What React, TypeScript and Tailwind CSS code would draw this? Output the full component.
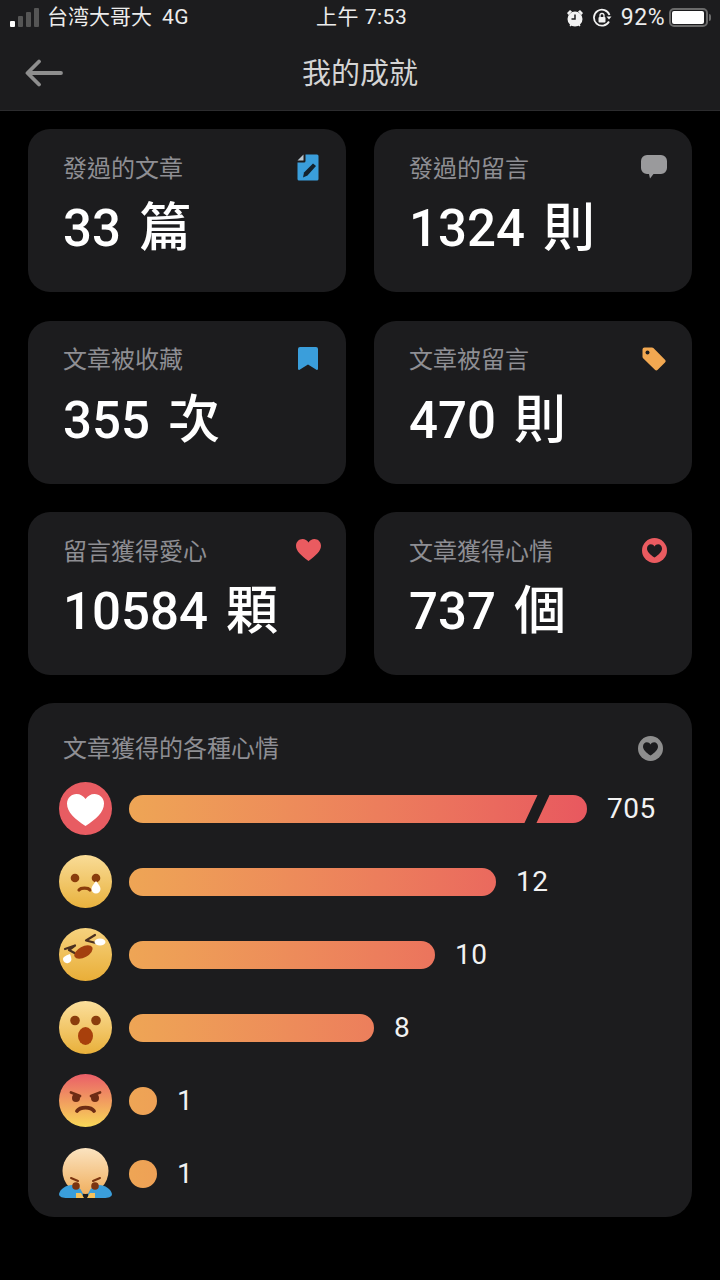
import type { ReactNode } from 'react';

function DocIcon() {
  return (
    <svg width="22" height="27" viewBox="0 0 22 27">
      <path d="M8.500 0.500H20a1.500 1.500 0 0 1 1.500 1.500v23a1.500 1.500 0 0 1-1.500 1.500H2A1.500 1.500 0 0 1 .5 25V8.500H7a1.500 1.500 0 0 0 1.500-1.500z" fill="#3a9edb" />
      <path d="M6.500 0.500v6H.5z" fill="#b9c6ce" />
      <path d="M16 9.500l3 2.500-8.500 9.500-4.500 2 1-5z" fill="#14222c" />
    </svg>
  );
}

function ChatIcon() {
  return (
    <svg width="26" height="24" viewBox="0 0 26 24">
      <path d="M6 0h14a6 6 0 0 1 6 6v7a6 6 0 0 1-6 6h-7.500L9 23.500 8 19H6a6 6 0 0 1-6-6V6a6 6 0 0 1 6-6z" fill="#9a9a9c" />
    </svg>
  );
}

function BookmarkIcon() {
  return (
    <svg width="20" height="23" viewBox="0 0 20 23">
      <path d="M2 0h16a2 2 0 0 1 2 2v20a1 1 0 0 1-1.600.7L10 17.500l-8.400 5.200A1 1 0 0 1 0 22V2a2 2 0 0 1 2-2z" fill="#3a9edb" />
    </svg>
  );
}

function TagIcon() {
  return (
    <svg width="24" height="24" viewBox="0 0 24 24">
      <path d="M2.500 0.500h7.500a2 2 0 0 1 1.400.6l11.600 11.600a2 2 0 0 1 0 2.800l-7.300 7.300a2 2 0 0 1-2.800 0L1.100 11.200a2 2 0 0 1-.6-1.400V2.500a2 2 0 0 1 2-2z" fill="#f2a851" />
      <circle cx="5.500" cy="5.500" r="2" fill="#1c1c1e" />
    </svg>
  );
}

function HeartIcon() {
  return (
    <svg width="25" height="22" viewBox="0 0 25 22">
      <path d="M12.500 22C5 16.500 0 12 0 6.800 0 2.900 3 0 6.600 0c2.400 0 4.600 1.300 5.900 3.400C13.800 1.300 16 0 18.400 0 22 0 25 2.900 25 6.800 25 12 20 16.500 12.500 22z" fill="#ea5b60" />
    </svg>
  );
}

function RingHeart({ color }: { color: string }) {
  return (
    <svg width="25" height="25" viewBox="0 0 25 25">
      <circle cx="12.500" cy="12.500" r="12.500" fill={color} />
      <path d="M12.500 19.500C8 16.300 5 13.700 5 10.400 5 8 6.800 6.300 8.900 6.300c1.500 0 2.800.8 3.600 2.100.8-1.300 2.100-2.100 3.600-2.100C18.200 6.300 20 8 20 10.400c0 3.300-3 5.900-7.500 9.100z" fill="#1c1c1e" />
    </svg>
  );
}

function Face({ id, top, bottom, children }: { id: string; top: string; bottom: string; children: ReactNode }) {
  return (
    <svg width="53" height="53" viewBox="0 0 53 53" className="shrink-0">
      <defs>
        <linearGradient id={id} x1="0" y1="0" x2="0" y2="1">
          <stop offset="0" stopColor={top} />
          <stop offset="1" stopColor={bottom} />
        </linearGradient>
      </defs>
      <circle cx="26.500" cy="26.500" r="26.500" fill={`url(#${id})`} />
      {children}
    </svg>
  );
}

function LoveFace() {
  return (
    <svg width="53" height="53" viewBox="0 0 53 53" className="shrink-0">
      <circle cx="26.500" cy="26.500" r="26.500" fill="#e85c62" />
      <path d="M26.500 44C16 37 8 30.500 8 21.500 8 16 12.500 12 17.500 12c3.800 0 7 2 9 5 2-3 5.200-5 9-5 5 0 9.500 4 9.500 9.500 0 9-8 15.500-18.500 22.500z" fill="#fff" />
    </svg>
  );
}

function CryFace() {
  return (
    <Face id="cry" top="#f9dc97" bottom="#e9b23e">
      <circle cx="16" cy="23" r="4.300" fill="#8a3d0c" />
      <circle cx="37" cy="23" r="4.300" fill="#8a3d0c" />
      <path d="M20 35c2-2.500 9-2.500 11 0" fill="none" stroke="#8a3d0c" strokeWidth="3.200" strokeLinecap="round" />
      <path d="M37 26c2.800 3.500 4.500 5.500 4.500 8a4.500 4.500 0 0 1-9 0c0-2.500 1.700-4.500 4.500-8z" fill="#fff" />
    </Face>
  );
}

function LaughFace() {
  return (
    <Face id="laugh" top="#f6d27e" bottom="#e9ae38">
      <path d="M6 21l10-3.500-6 4.500 5.500 3" fill="none" stroke="#4a3020" strokeWidth="2.200" strokeLinecap="round" strokeLinejoin="round" />
      <path d="M36 7l-9 5.500 10 2.500" fill="none" stroke="#4a3020" strokeWidth="2.200" strokeLinecap="round" strokeLinejoin="round" />
      <ellipse cx="24.500" cy="24" rx="10" ry="5.500" transform="rotate(-28 24.500 24)" fill="#a3400f" />
      <ellipse cx="41" cy="14" rx="5.500" ry="3.500" fill="#fff" />
      <path d="M11 26c1 3 2 5 1 7a4.300 4.300 0 0 1-8-2c0-2 3.500-4 7-5z" fill="#fff" />
    </Face>
  );
}

function WowFace() {
  return (
    <Face id="wow" top="#fbdf9c" bottom="#e9b03a">
      <circle cx="16" cy="19.500" r="4.800" fill="#8a3d0c" />
      <circle cx="37" cy="19.500" r="4.800" fill="#8a3d0c" />
      <ellipse cx="26.500" cy="35" rx="7.500" ry="9" fill="#a8400c" />
    </Face>
  );
}

function AngryFace() {
  return (
    <Face id="angry" top="#ea5e68" bottom="#f8d858">
      <path d="M12 18.500l9 3.500" stroke="#6d2c14" strokeWidth="2.800" strokeLinecap="round" />
      <path d="M41 18.500l-9 3.500" stroke="#6d2c14" strokeWidth="2.800" strokeLinecap="round" />
      <circle cx="17" cy="24" r="4" fill="#6d2c14" />
      <circle cx="36" cy="24" r="4" fill="#6d2c14" />
      <path d="M18 37c3-4.500 14-4.500 17 0" fill="none" stroke="#6d2c14" strokeWidth="3.800" strokeLinecap="round" />
    </Face>
  );
}

function BowFace() {
  return (
    <svg width="53" height="53" viewBox="0 0 53 53" className="shrink-0">
      <defs>
        <linearGradient id="bow" x1="0" y1="0" x2="0" y2="1">
          <stop offset="0" stopColor="#fbe3c0" />
          <stop offset="1" stopColor="#f0b060" />
        </linearGradient>
      </defs>
      <circle cx="26.500" cy="24" r="23" fill="url(#bow)" />
      <path d="M0 47c1-5 7-9 13-9 5 0 10 4 11 10-1 2-2 3-4 3H8c-4 0-8-1-8-4z" fill="#3a9edb" />
      <path d="M53 47c-1-5-7-9-13-9-5 0-10 4-11 10 1 2 2 3 4 3h12c4 0 8-1 8-4z" fill="#3a9edb" />
      <path d="M17 46l5 0 3 5h-8z M36 46l-5 0-3 5h8z" fill="#f5c15c" />
      <path d="M12 31l7 3 M41 31l-7 3" stroke="#7a3410" strokeWidth="2" strokeLinecap="round" />
      <circle cx="17" cy="39" r="3.800" fill="#7a3410" />
      <circle cx="36" cy="39" r="3.800" fill="#7a3410" />
    </svg>
  );
}

const cards = [
  { label: '發過的文章', value: '33', unit: '篇', icon: <DocIcon /> },
  { label: '發過的留言', value: '1324', unit: '則', icon: <ChatIcon /> },
  { label: '文章被收藏', value: '355', unit: '次', icon: <BookmarkIcon /> },
  { label: '文章被留言', value: '470', unit: '則', icon: <TagIcon /> },
  { label: '留言獲得愛心', value: '10584', unit: '顆', icon: <HeartIcon /> },
  { label: '文章獲得心情', value: '737', unit: '個', icon: <RingHeart color="#ea5b60" /> },
];

const rows = [
  { face: <LoveFace />, width: 458, count: 705, cut: true },
  { face: <CryFace />, width: 367, count: 12 },
  { face: <LaughFace />, width: 306, count: 10 },
  { face: <WowFace />, width: 245, count: 8 },
  { face: <AngryFace />, width: 28, count: 1 },
  { face: <BowFace />, width: 28, count: 1 },
];

export default function App() {
  return (
    <div className="h-[1280px] w-[720px] overflow-hidden bg-black font-['Roboto','Noto_Sans_CJK_TC',sans-serif]">
      <header className="h-[111px] border-b border-[#2c2c2e] bg-[#1c1c1e]">
        <div className="relative flex h-[35px] items-center justify-between pl-[10px] pr-[9px] text-[21px] leading-none text-[#ececec]">
          <div className="flex items-center">
            <div className="flex items-end gap-[3px]">
              <span className="h-[6px] w-[5px] rounded-[1px] bg-white" />
              <span className="h-[11px] w-[5px] rounded-[1px] bg-[#555]" />
              <span className="h-[15px] w-[5px] rounded-[1px] bg-[#555]" />
              <span className="h-[19px] w-[5px] rounded-[1px] bg-[#555]" />
            </div>
            <span className="ml-[8px]">台湾大哥大</span>
            <span className="ml-[10px] tracking-[0.5px]">4G</span>
          </div>
          <span className="absolute left-[316px] top-[7px] tracking-[0.5px]">上午 7:53</span>
          <div className="flex items-center">
            <svg width="18" height="20" viewBox="0 0 18 20">
              <circle cx="9" cy="11" r="7.500" fill="#f2f2f2" />
              <path d="M1 5l3-3 2 1.500-3.500 3.500z M17 5l-3-3-2 1.500 3.500 3.500z" fill="#f2f2f2" />
              <path d="M9 6.500V11H5.500" fill="none" stroke="#1c1c1e" strokeWidth="1.500" />
              <path d="M4 18l2-2 M14 18l-2-2" stroke="#f2f2f2" strokeWidth="1.500" />
            </svg>
            <svg width="20" height="20" viewBox="0 0 20 20" className="ml-[8px]">
              <path d="M17 13.500A8 8 0 1 1 17.500 7" fill="none" stroke="#f2f2f2" strokeWidth="1.800" />
              <path d="M14.500 8.500h5l-2.500 3z" fill="#f2f2f2" />
              <rect x="6.500" y="9" width="7" height="5.500" rx="1" fill="#f2f2f2" />
              <path d="M8 9V7.500a2 2 0 0 1 4 0V9" fill="none" stroke="#f2f2f2" strokeWidth="1.300" />
            </svg>
            <span className="ml-[9px] text-[23px] tracking-[0.5px]">92%</span>
            <div className="ml-[4px] flex items-center">
              <div className="h-[19px] w-[39px] rounded-[5px] border-2 border-[#6a6a6a] p-[1px]">
                <div className="h-full w-[32px] rounded-[2px] bg-white" />
              </div>
              <span className="ml-[1px] h-[7px] w-[2px] rounded-r-sm bg-[#6a6a6a]" />
            </div>
          </div>
        </div>
        <div className="relative flex h-[75px] items-center justify-center pt-[3px]">
          <svg width="38" height="28" viewBox="0 0 38 28" className="absolute left-[25px] top-[24px]">
            <path d="M36 14H3 M14 2.500L2.500 14 14 25.500" fill="none" stroke="#8e8e8e" strokeWidth="3.800" strokeLinecap="round" strokeLinejoin="round" />
          </svg>
          <h1 className="text-[29px] font-normal leading-none text-[#d4d4d4]">我的成就</h1>
        </div>
      </header>

      <main className="px-7 pt-[18px]">
        <div className="grid grid-cols-2 gap-x-7 gap-y-[28.5px]">
          {cards.map((card) => (
            <div key={card.label} className="h-[163px] rounded-[22px] bg-[#1c1c1e] pl-[35px] pr-[25px] pt-[23px]">
              <div className="flex h-8 items-center justify-between">
                <span className="pt-[1px] text-[24px] leading-8 text-[#8e8e93]">{card.label}</span>
                <div className="-mt-[2px] flex w-[26px] justify-center">{card.icon}</div>
              </div>
              <p className="mt-[15px] flex items-center whitespace-nowrap text-[51px] font-medium leading-[60px] text-white">
                <span>{card.value}</span>
                <span className="ml-[18px] text-[52px]">{card.unit}</span>
              </p>
            </div>
          ))}
        </div>

        <section className="mt-7 h-[514px] rounded-[26px] bg-[#1c1c1e] pl-[31px] pr-[29px] pt-[29px]">
          <div className="flex h-8 items-center justify-between pl-[4px]">
            <span className="pt-[1px] text-[24px] leading-8 text-[#8e8e93]">文章獲得的各種心情</span>
            <RingHeart color="#8e8e8e" />
          </div>
          <div className="mt-[18px] flex flex-col gap-5">
            {rows.map((row, i) => (
              <div key={i} className="flex items-center">
                {row.face}
                <div
                  className="relative ml-[17px] h-7 rounded-full bg-gradient-to-r from-[#eea555] to-[#e8585f] bg-[length:458px_100%] bg-no-repeat"
                  style={{ width: row.width }}
                >
                  {row.cut && <span className="absolute left-[402px] top-0 h-7 w-3 -skew-x-[25deg] bg-[#1c1c1e]" />}
                </div>
                <span className="ml-[20px] text-[28px] leading-none tracking-[0.5px] text-[#f2f2f2]">{row.count}</span>
              </div>
            ))}
          </div>
        </section>
      </main>
    </div>
  );
}
